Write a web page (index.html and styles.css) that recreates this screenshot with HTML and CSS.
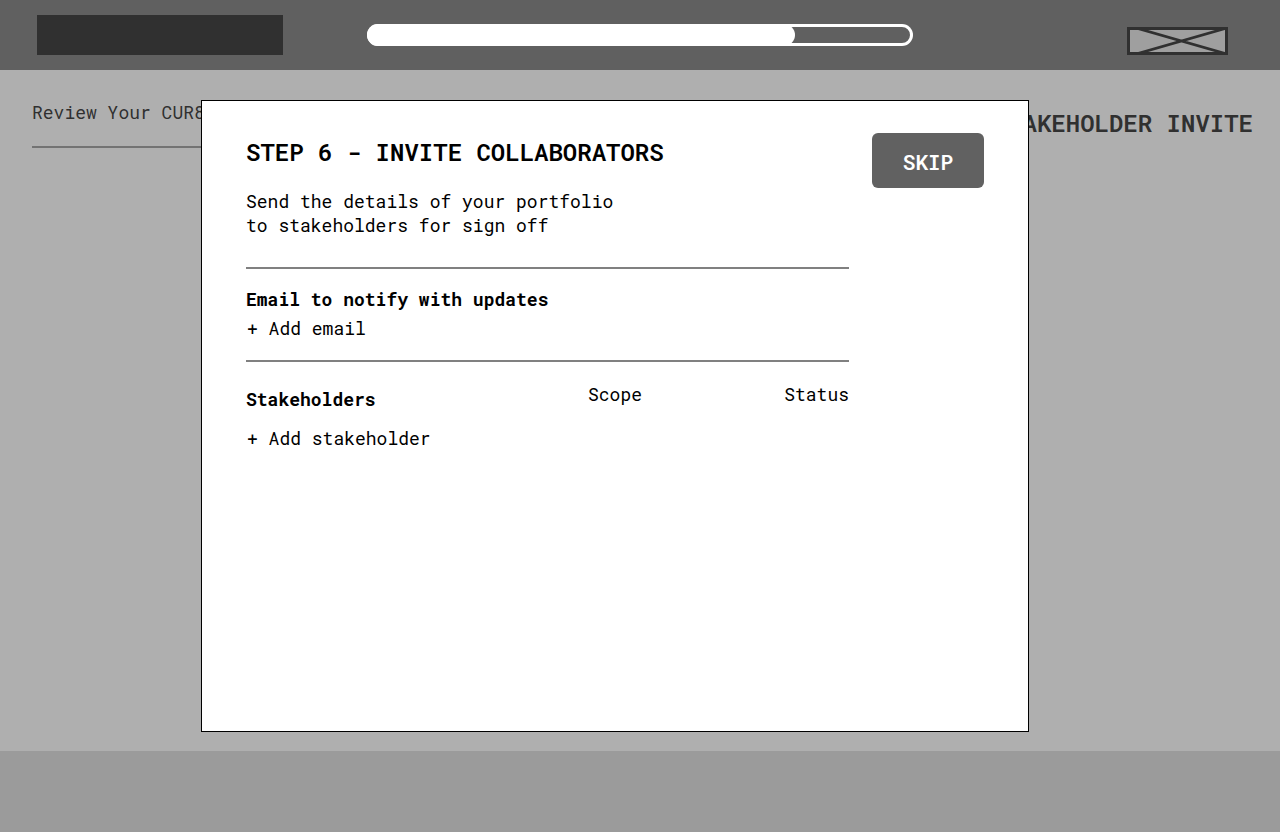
FILE: index.html
```html
<!DOCTYPE html>
<html lang="en">
<head>
  <meta charset="utf-8">
  <meta name="viewport" content="width=device-width, initial-scale=1">
  <title>Invite collaborators</title>
  <link rel="stylesheet" href="styles.css">
</head>
<body>
  <header class="topbar">
    <div class="logo"></div>
    <progress class="steps" aria-label="Setup progress" value="784" max="1000"></progress>
    <svg class="placeholder" viewBox="0 0 101 28" aria-hidden="true">
      <rect x="1.5" y="1.5" width="98" height="25" fill="#9f9f9f" />
      <path d="M9 1 L100 27 M9 27 L100 1" stroke="#303030" stroke-width="2.8" />
      <rect x="1.5" y="1.5" width="98" height="25" fill="none" stroke="#303030" stroke-width="3" />
    </svg>
  </header>

  <main class="page">
    <div class="review">
      <p class="review-text">Review Your CUR8</p>
    </div>
    <h1 class="page-title">STAKEHOLDER INVITE</h1>
  </main>

  <footer class="footer"></footer>

  <div class="overlay">
    <section class="dialog" role="dialog" aria-labelledby="dialog-title">
      <div class="content">
        <h2 class="title" id="dialog-title">STEP 6 - INVITE COLLABORATORS</h2>
        <p class="intro">Send the details of your portfolio<br>to stakeholders for sign off</p>
        <div class="emails">
          <h3 class="label">Email to notify with updates</h3>
          <button class="add" type="button">+ Add email</button>
        </div>
        <table class="stakeholders">
          <thead>
            <tr>
              <th class="name">Stakeholders</th>
              <th class="scope">Scope</th>
              <th class="status">Status</th>
            </tr>
          </thead>
          <tbody>
            <tr>
              <td colspan="3"><button class="add" type="button">+ Add stakeholder</button></td>
            </tr>
          </tbody>
        </table>
      </div>
      <button class="skip" type="button">SKIP</button>
    </section>
  </div>
</body>
</html>
```
FILE: styles.css
```css
* {
  box-sizing: border-box;
}

body {
  display: flex;
  flex-direction: column;
  min-height: 100vh;
  margin: 0;
  background: #afafaf;
  color: #000;
  font-family: "Roboto Mono", "Liberation Mono", monospace;
  font-size: 18px;
  line-height: 24px;
}

h1, h2, h3, p {
  margin: 0;
}

button {
  padding: 0;
  border: 0;
  font: inherit;
  cursor: pointer;
}

.topbar {
  display: grid;
  grid-template-columns: 1fr minmax(0, 546px) 1fr;
  height: 70px;
  padding: 15px 0;
  background: #606060;
}

.logo {
  width: 246px;
  height: 40px;
  margin-left: 37px;
  background: #303030;
}

.steps {
  appearance: none;
  align-self: center;
  width: 100%;
  height: 22px;
  border: 0;
  background: transparent;
}

.steps::-webkit-progress-bar {
  border-radius: 11px;
  background: #606060;
  box-shadow: inset 0 0 0 3px #fff;
}

.steps::-webkit-progress-value {
  border-radius: 11px;
  background: #fff;
}

.placeholder {
  align-self: end;
  justify-self: end;
  width: 101px;
  height: 28px;
  margin-right: 52px;
}

.page {
  display: flex;
  flex: 1;
  justify-content: space-between;
  padding: 30px 27px 0 32px;
  color: #303030;
}

.review {
  flex: 0 1 600px;
}

.review-text {
  padding-bottom: 22px;
  border-bottom: 2px solid #737373;
}

.page-title {
  padding-top: 7px;
  font-size: 24px;
  font-weight: 600;
  line-height: 32px;
}

.footer {
  height: 81px;
  background: #9b9b9b;
}

.overlay {
  position: absolute;
  inset: 0;
  display: flex;
  padding: 100px 251px 100px 201px;
}

.dialog {
  display: flex;
  flex: 1;
  gap: 23px;
  align-items: flex-start;
  padding: 32px 44px;
  border: 1px solid #000;
  background: #fff;
}

.content {
  flex: 1;
  padding-top: 3px;
}

.title {
  font-size: 24px;
  font-weight: 600;
  line-height: 32px;
}

.intro {
  padding: 21px 0 30px;
}

.emails {
  padding: 18px 0 20px;
  border: solid #808080;
  border-width: 2px 0;
}

.label {
  margin-bottom: 5px;
  font-size: 18px;
  font-weight: 700;
}

.add {
  display: block;
  padding-left: 1px;
  background: none;
  color: inherit;
}

.stakeholders {
  width: 100%;
  margin-top: 20px;
  border-collapse: collapse;
}

.stakeholders th {
  height: 29px;
  padding: 0;
  font-weight: 400;
  text-align: left;
  vertical-align: top;
}

.stakeholders .name {
  width: 342px;
  font-weight: 700;
  vertical-align: bottom;
}

.stakeholders .status {
  text-align: right;
}

.stakeholders td {
  padding: 15px 0 0;
}

.skip {
  width: 112px;
  height: 55px;
  padding-top: 2px;
  border-radius: 6px;
  background: #616161;
  color: #fff;
  font-size: 21px;
  font-weight: 600;
}
```
